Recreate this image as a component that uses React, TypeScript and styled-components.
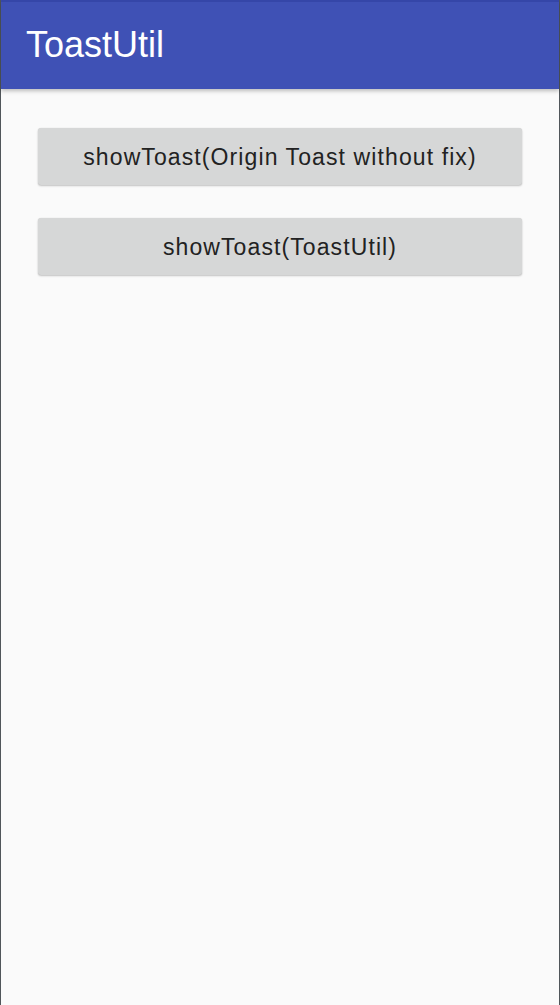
import React from "react"
import styled, { createGlobalStyle } from "styled-components"

const GlobalStyle = createGlobalStyle`
  html, body {
    margin: 0;
    padding: 0;
    background: #fafafa;
  }
  body {
    font-family: "Liberation Sans", Arial, sans-serif;
  }
`

const Screen = styled.div`
  display: flex;
  flex-direction: column;
  height: 1005px;
  box-sizing: border-box;
  background: #fafafa;
  border-left: 1px solid #50565a;
  border-right: 1px solid #50565a;
`

const AppBar = styled.header`
  display: flex;
  align-items: center;
  height: 89px;
  box-sizing: border-box;
  padding: 0 0 2px 25px;
  background: #3f51b5;
  border-top: 2px solid #3546a8;
  box-shadow: 0 2px 4px rgba(0, 0, 0, 0.25);
  position: relative;
  z-index: 1;
`

const Title = styled.h1`
  margin: 0;
  color: #fff;
  font-size: 36px;
  font-weight: 400;
  line-height: 1;
`

const Content = styled.main`
  display: flex;
  flex-direction: column;
  gap: 33px;
  padding: 39px 37px 0 37px;
`

const ActionButton = styled.button`
  height: 57px;
  border: none;
  border-radius: 3px;
  background: #d6d7d7;
  color: #222;
  font-family: inherit;
  font-size: 23px;
  letter-spacing: 1.1px;
  padding: 2px 0 0;
  box-shadow: 0 1px 2px rgba(0, 0, 0, 0.22), 0 0 1px rgba(0, 0, 0, 0.12);
  cursor: pointer;
`

const App: React.FC = () => {
  return (
    <>
      <GlobalStyle />
      <Screen>
        <AppBar>
          <Title>ToastUtil</Title>
        </AppBar>
        <Content>
          <ActionButton>showToast(Origin Toast without fix)</ActionButton>
          <ActionButton>showToast(ToastUtil)</ActionButton>
        </Content>
      </Screen>
    </>
  )
}

export default App
